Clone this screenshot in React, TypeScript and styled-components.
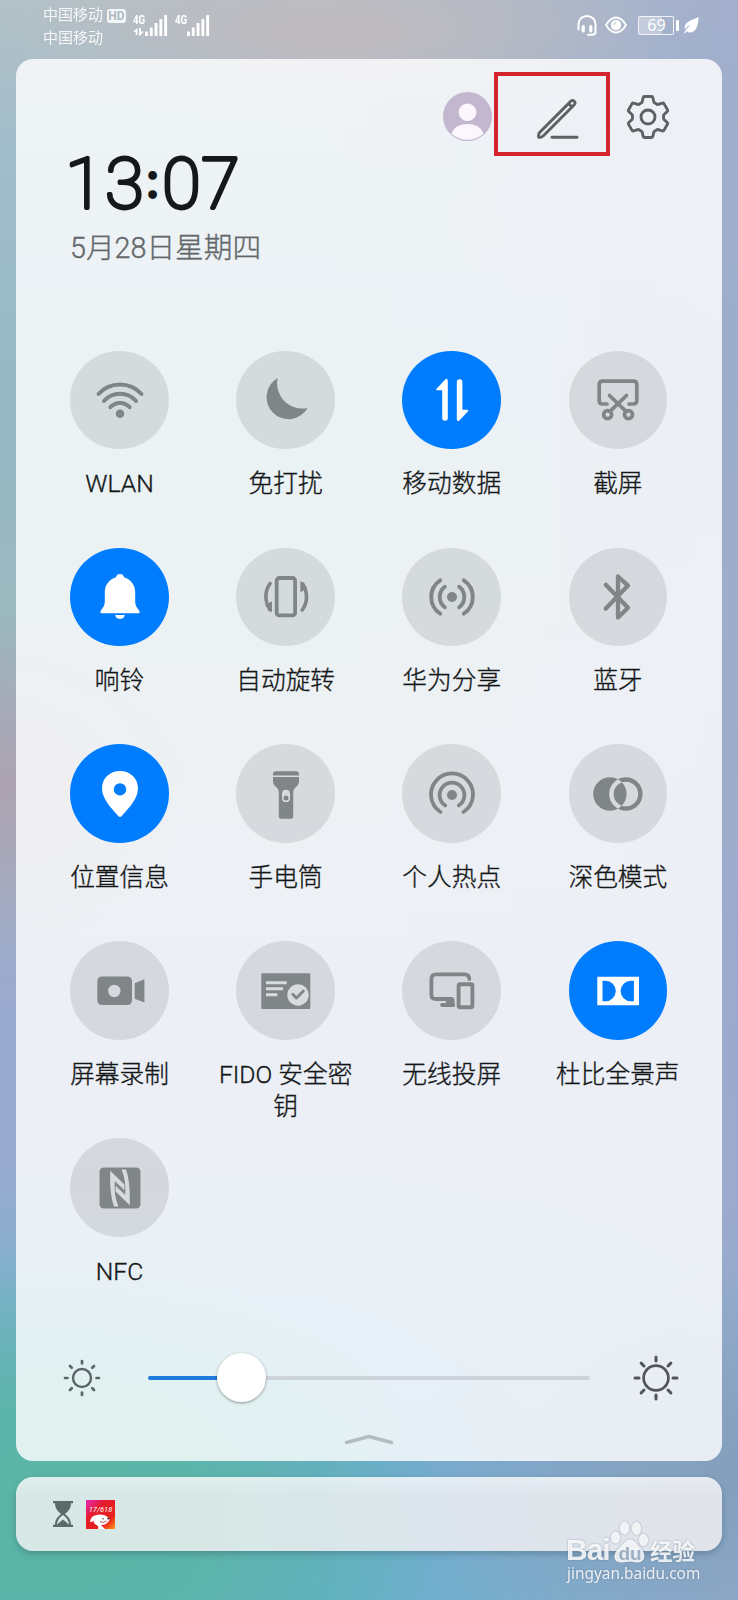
import React from "react";
import styled, { createGlobalStyle } from "styled-components";

const Global = createGlobalStyle`
  * { box-sizing: border-box; }
  html, body { margin: 0; padding: 0; }
  body { font-family: Roboto, "Noto Sans CJK SC", sans-serif; }
  svg { display: block; flex: none; overflow: visible; }
`;

const Screen = styled.div`
  position: relative;
  width: 738px;
  height: 1600px;
  overflow: hidden;
  display: flex;
  flex-direction: column;
  background:
    radial-gradient(ellipse 330px 90px at 46% 2%, #c1babf 0%, rgba(193, 186, 191, 0) 100%),
    radial-gradient(ellipse 200px 170px at 0% 49%, rgba(176, 160, 174, 0.85) 0%, rgba(179, 160, 176, 0) 100%),
    radial-gradient(ellipse 400px 270px at 6% 95%, #5ab5a6 0%, #5cb5a9 40%, rgba(92, 181, 169, 0) 100%),
    radial-gradient(ellipse 330px 220px at 100% 92%, #829fbc 0%, rgba(130, 159, 188, 0) 100%),
    linear-gradient(90deg, rgba(160, 168, 204, 0) 0%, rgba(160, 168, 204, 0) 45%, rgba(158, 170, 206, 0.8) 100%),
    linear-gradient(180deg, #b3c1c7 0%, #a2bdcb 9%, #94b8c4 25%, #9bb8bf 38%, #a0afc6 55%, #9aa9d0 64%, #9aabd0 72%, #7fb0cf 82%, #6bacd0 92%, #65b0cc 100%);
`;

const StatusBar = styled.header`
  height: 59px;
  flex: none;
  padding: 4px 39px 0 43px;
  display: flex;
  justify-content: space-between;
  color: #fff;
`;

const StatusGroup = styled.div`
  display: flex;
`;

const Carriers = styled.div`
  width: 62px;
  font-size: 15px;
  line-height: 22.5px;
  font-weight: 400;
  opacity: 0.88;
`;

const HdBadge = styled.span`
  margin: 5px 0 0 2px;
  width: 19px;
  height: 13.5px;
  border-radius: 3px;
  background: #f4f7f8;
  color: #adb9c2;
  font: 700 12px/14px Roboto, sans-serif;
  text-align: center;
`;

const SignalBlock = styled.div<{ $left: number; $width: number }>`
  margin-left: ${(p) => p.$left}px;
  width: ${(p) => p.$width}px;
  padding-top: 10px;
  display: flex;
`;

const SignalMeta = styled.div`
  width: 12px;
`;

const NetworkType = styled.div`
  height: 12px;
  font: 700 13.5px/11px Roboto, sans-serif;
  transform: scaleX(0.72);
  transform-origin: left;
`;

const Battery = styled.div`
  margin: 12px 3px 0 11px;
  width: 36px;
  height: 19px;
  border: 1.3px solid rgba(255, 255, 255, 0.8);
  border-radius: 2px;
  background: linear-gradient(90deg, rgba(255, 255, 255, 0.32) 69%, transparent 69%);
  font: 400 16px/17px "Noto Sans", sans-serif;
  text-align: center;
`;

const BatteryNub = styled.i`
  width: 2.6px;
  height: 11px;
  margin: 16px 5px 0 -1px;
  border-radius: 1px;
  background: #fff;
`;

const Panel = styled.main`
  margin: 0 16px;
  height: 1401.5px;
  flex: none;
  border-radius: 17px;
  background: rgba(255, 255, 255, 0.81);
  display: flex;
  flex-direction: column;
`;

const Toolbar = styled.div`
  height: 97px;
  padding: 13px 52px 0 0;
  display: flex;
  justify-content: flex-end;
`;

const Avatar = styled.div`
  margin: 20px 2px 0 0;
  width: 49px;
  height: 49px;
`;

const EditFrame = styled.div`
  width: 116px;
  height: 84px;
  border: 4px solid #d4242e;
  padding: 20.5px 0 0 37.5px;
`;

const GearButton = styled.div`
  margin: 21.5px 0 0 16px;
`;

const Clock = styled.div`
  height: 54px;
  padding-left: 54px;
`;

const DateLine = styled.div`
  margin-top: 17.5px;
  padding-left: 54px;
  height: 40px;
  font-size: 28.7px;
  line-height: 40px;
  font-weight: 300;
  color: #63676a;
  -webkit-text-stroke: 0.35px #63676a;
`;

const Tiles = styled.section`
  margin: 83.2px 0 0 20.5px;
  display: grid;
  grid-template-columns: repeat(4, 166.1px);
  grid-auto-rows: 196.9px;
`;

const Tile = styled.div`
  display: flex;
  flex-direction: column;
  align-items: center;
`;

const Disc = styled.div<{ $on?: boolean }>`
  width: 98.5px;
  height: 98.5px;
  flex: none;
  border-radius: 50%;
  display: grid;
  place-items: center;
  background: ${(p) => (p.$on ? "#007dff" : "rgba(0, 0, 0, 0.095)")};
  color: ${(p) => (p.$on ? "#fff" : "#808587")};
`;

const Label = styled.div`
  margin-top: 19px;
  width: 144px;
  font-size: 24.7px;
  line-height: 32.3px;
  font-weight: 300;
  text-align: center;
  color: #141718;
  -webkit-text-stroke: 0.35px #141718;
`;

const Brightness = styled.div`
  margin-top: 16.5px;
  height: 52px;
  padding: 0 43px 0 46.5px;
  display: flex;
  align-items: center;
`;

const Track = styled.div`
  margin: 0 43px 0 47px;
  width: 443px;
  height: 4px;
  border-radius: 2px;
  background: #cdd4db;
  display: flex;
  align-items: center;
`;

const TrackFill = styled.div`
  width: 69px;
  height: 4px;
  border-radius: 2px 0 0 2px;
  background: #1f7bdd;
`;

const Thumb = styled.div`
  width: 49.5px;
  height: 49.5px;
  flex: none;
  border-radius: 50%;
  background: #fff;
  box-shadow: 0 1px 3px rgba(0, 0, 0, 0.38);
`;

const Handle = styled.div`
  margin-top: 30px;
  display: flex;
  justify-content: center;
`;

const Notice = styled.footer`
  margin: 16.5px 16px 0;
  height: 74px;
  flex: none;
  border-radius: 17px;
  padding: 0 37px;
  display: flex;
  align-items: center;
  gap: 13px;
  background: linear-gradient(180deg, rgba(255, 255, 255, 0.8) 0, rgba(247, 244, 245, 0.8) 18px);
  box-shadow: 0 3px 6px rgba(40, 70, 80, 0.3);
`;

const Watermark = styled.div`
  position: absolute;
  left: 566px;
  top: 1519px;
  width: 140px;
  color: rgba(255, 255, 255, 0.85);
  filter: drop-shadow(0 0 1px rgba(90, 110, 130, 0.6));
`;

const Brand = styled.div`
  height: 45px;
  display: flex;
  align-items: flex-end;
`;

const BrandLatin = styled.span`
  width: 44px;
  font: 700 30px/28px "Liberation Sans", sans-serif;
  letter-spacing: -1px;
`;

const BrandHan = styled.span`
  font: 700 22.5px/28px "Noto Sans CJK SC", sans-serif;
`;

const Site = styled.div`
  margin-left: 1px;
  font: 400 15.4px/20px "Noto Sans", sans-serif;
`;

const G = ({ children }: { children: React.ReactNode }) => (
  <svg width="98" height="98" viewBox="-49 -49 98 98" fill="currentColor" strokeLinecap="round" strokeLinejoin="round">
    {children}
  </svg>
);

const line = (w: number) => ({ fill: "none", stroke: "currentColor", strokeWidth: w });
const PALE = "#d6dbe0";

const ArrowUp = () => <path d="M-15.200-11.600-7.500-19.800Q-4.200-23-4.200-18.500V18a2.800 2.800 0 0 1-5.600 0V-9.800h-4.600Q-16.800-9.800-15.200-11.600Z" />;
const TurnArc = () => (
  <>
    <path d="M-15.800-13.600C-21.500-6-21.500 4-16.200 12.600" {...line(3.6)} />
    <path d="M-14 4.200V15.600L-21 8.200Z" />
  </>
);
const NfcLimb = () => <path fill={PALE} d="M-9.8-17.2 4.4-3.6V2.2L-5.2-7C-5.8 3-4.8 11-1.4 18.4H-6C-9.8 8-10-6-9.8-17.2Z" />;

const icons = {
  wifi: (
    <G>
      <circle cy="13.7" r="4.3" />
      <path d="M-21.500-6a29.300 29.300 0 0 1 43 0M-16 1a21.500 21.500 0 0 1 32 0M-9.600 7.200a13 13 0 0 1 19.200 0" {...line(4)} />
    </G>
  ),
  moon: (
    <G>
      <path d="M-8.3-22A22 22 0 1 0 21.7 8 25.3 25.3 0 0 1-8.3-22Z" />
    </G>
  ),
  data: (
    <G>
      <ArrowUp />
      <g transform="rotate(180 .3 0)"><ArrowUp /></g>
    </G>
  ),
  capture: (
    <G>
      <path d="M-11 4h-4.300Q-18.800 4-18.800 .5V-15.300Q-18.800-18.800-15.300-18.800H15.300Q18.800-18.800 18.800-15.300V.5Q18.800 4 15.300 4H11M-8.500-4.500 8 11.400M8.500-4.500-8 11.400" {...line(3.7)} />
      <circle cx="-10.4" cy="14.700" r="4" {...line(3.7)} />
      <circle cx="10.500" cy="14.700" r="4" {...line(3.7)} />
    </G>
  ),
  bell: (
    <G>
      <path d="M0-23C2.500-23 3.800-21.500 4-19.800 11-17.500 15.200-12 15.200-5V4.500C15.200 9 17.500 11 19.500 14.200Q20.200 16.200 18.500 16.200H-18.500Q-20.200 16.200-19.500 14.200C-17.500 11-15.200 9-15.200 4.500V-5C-15.200-12-11-17.500-4-19.800-3.800-21.500-2.500-23 0-23ZM-4.800 17.900H4.800A4.900 4.900 0 0 1-4.800 17.900Z" />
    </G>
  ),
  rotate: (
    <G>
      <rect x="-9.300" y="-19" width="18.400" height="37.400" rx="2.500" {...line(3.8)} />
      <TurnArc />
      <g transform="rotate(180 0.2 -.3)"><TurnArc /></g>
    </G>
  ),
  share: (
    <G>
      <circle r="5" />
      <path d="M-7.200-10.200a12.800 12.800 0 0 0 0 20.400M7.200-10.200a12.800 12.800 0 0 1 0 20.400M-11.800-16.700a20 20 0 0 0 0 33.400M11.800-16.700a20 20 0 0 1 0 33.400" {...line(3.9)} />
    </G>
  ),
  bluetooth: (
    <G>
      <path d="M-12.200-12.200 10 10.700 0 20.500V-20.500L10-11.400-12.200 11.600" {...line(4.3)} />
    </G>
  ),
  pin: (
    <G>
      <path fillRule="evenodd" d="M0-23C10.500-23 18-15.500 18-5.500 18 4 10 13 1.500 22.200Q0 23.600-1.500 22.200C-10 13-18 4-18-5.500-18-15.500-10.500-23 0-23ZM0-10.800a6.200 6.200 0 1 0 0 12.400 6.200 6.200 0 0 0 0-12.400Z" />
    </G>
  ),
  torch: (
    <G>
      <path d="M-13-18.600v-1.400Q-13-22.800-10-22.800H10Q13-22.800 13-20v1.400ZM-13-17H13v4.500Q13-10 11.200-8.300 7.200-5 7.200-2V22.200Q7.200 24.700 4.700 24.700H-4.700Q-7.200 24.700-7.200 22.200V-2Q-7.200-5-11.200-8.300-13-10-13-12.500Z" />
      <rect x="-4" y="-4.300" width="8" height="12.600" rx="4" fill={PALE} />
      <circle cy="3.900" r="2.500" />
    </G>
  ),
  hotspot: (
    <G>
      <circle cy="1" r="5" />
      <path d="M-6.800 11.400a12.400 12.400 0 1 1 13.600 0M-11.500 18a21 21 0 1 1 23 0" {...line(3.8)} />
    </G>
  ),
  dark: (
    <G>
      <path fillRule="evenodd" d="M-24.800 0a16.700 16.700 0 1 0 33.400 0 16.700 16.700 0 1 0-33.400 0ZM-8.800 0a16.700 16.700 0 1 0 33.400 0 16.700 16.700 0 1 0-33.400 0ZM-4.400 0a12.300 12.300 0 1 0 24.600 0 12.300 12.300 0 1 0-24.600 0Z" />
    </G>
  ),
  record: (
    <G>
      <path fillRule="evenodd" d="M-17.700-14.600H7Q12-14.600 12-9.600V9Q12 14 7 14H-17.700Q-22.700 14-22.700 9V-9.600Q-22.700-14.600-17.700-14.600ZM-5.700-6.200a6.200 6.200 0 1 0 0 12.400 6.200 6.200 0 0 0 0-12.400ZM14.700-7.800 24.400-11.700V11.500L14.700 7.700Z" />
    </G>
  ),
  fido: (
    <G>
      <rect x="-24.700" y="-17.700" width="49" height="35.700" rx="1" />
      <path d="M-20-8.300H.7M-20-2.300H-3M-20 3.700H-8.700" fill="none" stroke={PALE} strokeWidth="3" strokeLinecap="butt" />
      <circle cx="12" cy="4" r="10.700" fill={PALE} />
      <path d="M6.800 3.200 10.400 7 17.400 0" {...line(2.8)} />
    </G>
  ),
  cast: (
    <G>
      <path d="M17.300-12Q17.300-16.700 12.500-16.700H-16Q-20.600-16.700-20.600-12V4Q-20.600 8 -16 8H0M-10 14H1" {...line(3.8)} />
      <path d="M-6 8H2.500V15.800H-6Z" />
      <rect x="6.600" y="-6.800" width="13.800" height="23.100" rx="1.500" {...line(3.9)} />
    </G>
  ),
  dolby: (
    <G>
      <path fillRule="evenodd" d="M-20.700-14.300H21V14.300H-20.700ZM-15.500-10.300H-12.500A10.300 10.300 0 0 1-12.500 10.300H-15.500ZM15.900-10.300H12.900A10.300 10.300 0 0 0 12.900 10.300H15.900Z" />
    </G>
  ),
  nfc: (
    <G>
      <rect x="-20.500" y="-20.500" width="41" height="41" rx="4.500" />
      <NfcLimb />
      <g transform="rotate(180 0 0)"><NfcLimb /></g>
    </G>
  ),
};

const tiles: { name: string; icon: keyof typeof icons; on?: boolean }[] = [
  { name: "WLAN", icon: "wifi" },
  { name: "免打扰", icon: "moon" },
  { name: "移动数据", icon: "data", on: true },
  { name: "截屏", icon: "capture" },
  { name: "响铃", icon: "bell", on: true },
  { name: "自动旋转", icon: "rotate" },
  { name: "华为分享", icon: "share" },
  { name: "蓝牙", icon: "bluetooth" },
  { name: "位置信息", icon: "pin", on: true },
  { name: "手电筒", icon: "torch" },
  { name: "个人热点", icon: "hotspot" },
  { name: "深色模式", icon: "dark" },
  { name: "屏幕录制", icon: "record" },
  { name: "FIDO 安全密钥", icon: "fido" },
  { name: "无线投屏", icon: "cast" },
  { name: "杜比全景声", icon: "dolby", on: true },
  { name: "NFC", icon: "nfc" },
];

const Bars = () => (
  <svg width="22" height="22" viewBox="0 0 22 22" fill="#fff">
    <rect x="0" y="17.500" width="2.900" height="4.500" rx=".6" />
    <rect x="4.800" y="13.500" width="2.900" height="8.500" rx=".6" />
    <rect x="9.600" y="9" width="2.900" height="13" rx=".6" />
    <rect x="14.400" y="5" width="2.900" height="17" rx=".6" />
    <rect x="19.200" y="1" width="2.900" height="21" rx=".6" />
  </svg>
);

const Sun = ({ size, r, from, to, w, color }: { size: number; r: number; from: number; to: number; w: number; color: string }) => (
  <svg width={size} height={size} viewBox={`${-size / 2} ${-size / 2} ${size} ${size}`} fill="none" stroke={color} strokeWidth={w} strokeLinecap="round">
    <circle r={r} />
    {[0, 45, 90, 135, 180, 225, 270, 315].map((a) => (
      <path key={a} d={`M0 ${-from}V${-to}`} transform={`rotate(${a})`} strokeWidth={w + 0.3} />
    ))}
  </svg>
);

const gearPath = (() => {
  const pts: string[] = [];
  for (let i = 0; i < 6; i++) {
    const at = (deg: number, rad: number) => {
      const t = ((i * 60 + deg - 90) * Math.PI) / 180;
      return `${(Math.cos(t) * rad).toFixed(2)} ${(Math.sin(t) * rad).toFixed(2)}`;
    };
    pts.push(`${i ? "L" : "M"}${at(-14, 20)}Q${at(-12.5, 21)} ${at(-10, 20.8)}L${at(10, 20.8)}Q${at(12.5, 21)} ${at(14, 20)}L${at(18, 17.6)}Q${at(21, 15.6)} ${at(25, 15.6)}L${at(35, 15.6)}Q${at(39, 15.6)} ${at(42, 17.6)}`);
  }
  return pts.join("") + "Z";
})();

export default function App() {
  return (
    <>
      <Global />
      <Screen>
        <StatusBar>
          <StatusGroup>
            <Carriers>
              <div>中国移动</div>
              <div>中国移动</div>
            </Carriers>
            <HdBadge>HD</HdBadge>
            <SignalBlock $left={7} $width={42}>
              <SignalMeta>
                <NetworkType>4G</NetworkType>
                <svg width="12" height="9" viewBox="0 0 12 9" fill="#fff" style={{ marginTop: 2 }}>
                  <path d="M0 4 4.500 0V7H2.700V4ZM6 0H7.800V3.500L11 3.400 7.200 7.500H6Z" />
                </svg>
              </SignalMeta>
              <Bars />
            </SignalBlock>
            <SignalBlock $left={0} $width={40}>
              <SignalMeta>
                <NetworkType>4G</NetworkType>
              </SignalMeta>
              <Bars />
            </SignalBlock>
          </StatusGroup>
          <StatusGroup>
            <svg width="20" height="22" viewBox="0 0 20 22" style={{ marginTop: 11 }} fill="none" stroke="#fff" strokeWidth="2" strokeLinecap="round">
              <path d="M1.500 14.500V9a8.500 8 0 0 1 17 0V17Q18.500 19.800 15 19.800H11" />
              <path d="M6.200 11.500V16M13.800 11.500V16" strokeWidth="3.200" />
            </svg>
            <svg width="22" height="18" viewBox="0 0 22 18" style={{ margin: "12px 0 0 8px" }} fill="none" stroke="#fff" strokeWidth="1.800">
              <path d="M1 9Q5.500 1.500 11 1.500T21 9Q16.500 16.500 11 16.500T1 9Z" />
              <circle cx="11" cy="9" r="4.300" fill="#fff" />
              <path d="M9 9a2.300 2.300 0 0 1 2.300-2.300" stroke="#b4b9c8" strokeWidth="1" />
            </svg>
            <Battery>69</Battery>
            <BatteryNub />
            <svg width="15" height="17" viewBox="0 0 17 17" preserveAspectRatio="none" style={{ marginTop: 13 }} fill="#fff">
              <path d="M16.500 0C16.300 8 14 15.500 6.500 15.500Q4.500 15.500 3 14L1 16.500 0 15.800Q2.500 11.500 8 7.500 2.500 10 .8 12.300C-.5 4.500 9 3.500 16.500 0Z" />
            </svg>
          </StatusGroup>
        </StatusBar>

        <Panel>
          <Toolbar>
            <Avatar>
              <svg width="49" height="49" viewBox="0 0 49 49">
                <circle cx="24.500" cy="24.500" r="24.500" fill="#c3b7d0" />
                <circle cx="24.500" cy="20.300" r="8.800" fill="#fbf7fd" />
                <path d="M8.300 41.500Q12 32 24.500 32T40.700 41.500A24 24 0 0 1 8.300 41.500Z" fill="#fbf7fd" />
              </svg>
            </Avatar>
            <EditFrame>
              <svg width="44" height="44" viewBox="0 0 44 44" fill="none" stroke="#5d6164" strokeWidth="2.900" strokeLinecap="round" strokeLinejoin="round">
                <path d="M2.600 38Q2.600 36.400 3.800 35.200L34.400 4.600Q36.400 2.400 38.200 4.200 40 6 38 8L7.400 38.800Q6 40.200 4.600 40.200H2.600ZM32.400 6.600 36.200 10" />
                <path d="M16 40.200H41" />
              </svg>
            </EditFrame>
            <GearButton>
              <svg width="44" height="46" viewBox="-22 -23 44 46" fill="none" stroke="#5d6164" strokeWidth="2.900" strokeLinejoin="round">
                <path d={gearPath} />
                <circle r="7" />
              </svg>
            </GearButton>
          </Toolbar>

          <Clock>
            <svg width="172" height="54" viewBox="0 0 172 54" fill="#14181a" stroke="#14181a" strokeWidth="3.800" strokeLinejoin="round" textAnchor="middle" fontFamily="Roboto, sans-serif" fontSize="70" fontWeight="100">
              <text y="52">
                <tspan x="14.500">1</tspan>
                <tspan x="54.500">3</tspan>
                <tspan x="82.500" y="40.500" fontSize="44" fontWeight="400">:</tspan>
                <tspan x="111.500" y="52">0</tspan>
                <tspan x="150.500">7</tspan>
              </text>
            </svg>
          </Clock>
          <DateLine>5月28日星期四</DateLine>

          <Tiles>
            {tiles.map((t) => (
              <Tile key={t.name}>
                <Disc $on={t.on}>{icons[t.icon]}</Disc>
                <Label>{t.name}</Label>
              </Tile>
            ))}
          </Tiles>

          <Brightness>
            <Sun size={38} r={9} from={14.5} to={17} w={2.4} color="#5b6468" />
            <Track>
              <TrackFill />
              <Thumb />
            </Track>
            <Sun size={46} r={12.400} from={17} to={21} w={2.700} color="#50555a" />
          </Brightness>

          <Handle>
            <svg width="50" height="11" viewBox="0 0 50 11" fill="none" stroke="#b4bcc3" strokeWidth="3.500" strokeLinecap="round" strokeLinejoin="round">
              <path d="M2.500 8.500 25 2.500 47.500 8.500" />
            </svg>
          </Handle>
        </Panel>

        <Notice>
          <svg width="20" height="26" viewBox="0 0 20 26" fill="#5d6a6b">
            <path d="M0 0H20V2.200H18C18 8 14.500 11 11.800 13 14.500 15 18 18 18 23.800H20V26H0V23.800H2C2 18 5.500 15 8.200 13 5.500 11 2 8 2 2.200H0ZM4 23.800Q6 21.500 10 18.500 14 21.500 16 23.800 16 18 10 14 4 18 4 23.800Z" fillRule="evenodd" />
          </svg>
          <svg width="29" height="29" viewBox="0 0 29 29">
            <defs>
              <linearGradient id="app" x1="0" y1="0" x2="1" y2="1">
                <stop offset="0" stopColor="#e32bb8" />
                <stop offset=".35" stopColor="#e51a2c" />
                <stop offset=".75" stopColor="#ea2118" />
                <stop offset="1" stopColor="#ff9a1a" />
              </linearGradient>
            </defs>
            <rect width="29" height="29" fill="url(#app)" />
            <text x="14.500" y="11.500" textAnchor="middle" fontSize="7.500" fontStyle="italic" fontWeight="400" fontFamily="Roboto, sans-serif" fill="#fff">17/618</text>
            <path d="M4 22Q5 16 9 15.500 17 13 22.500 17.500 25 20 21.500 22.500 19 25.500 15 25L19 29H12Q13 26 10.500 25 7.500 23.500 7.500 20.500Q6 22.500 4 22Z" fill="#fff" />
            <circle cx="17" cy="18.800" r=".7" fill="#222" />
            <circle cx="22.300" cy="18.500" r="1" fill="#222" />
            <path d="M14 21.500Q17 23.500 20.500 21" fill="none" stroke="#a33" strokeWidth=".8" />
          </svg>
        </Notice>

        <Watermark>
          <Brand>
            <BrandLatin>Bai</BrandLatin>
            <svg width="40" height="44" viewBox="0 0 40 44" fill="currentColor">
              <ellipse cx="5.500" cy="17.500" rx="4.600" ry="6" />
              <ellipse cx="14.500" cy="8" rx="4.600" ry="6.500" />
              <ellipse cx="26.500" cy="8.500" rx="4.600" ry="6.500" />
              <ellipse cx="33.500" cy="20" rx="4.600" ry="6" />
              <path d="M20 19.500C25 19.500 27 25 30.500 28.500 36 33 36 42 28 42.500 24 42.700 23 41.800 20 41.800S15 42.700 11 42.500C2 42 3 33 9 28.500 13 25 15 19.500 20 19.500Z" />
              <text x="20" y="40" textAnchor="middle" fontSize="19" fontWeight="700" fontFamily="Liberation Sans, sans-serif" fill="#9db0c4">du</text>
            </svg>
            <BrandHan>经验</BrandHan>
          </Brand>
          <Site>jingyan.baidu.com</Site>
        </Watermark>
      </Screen>
    </>
  );
}
